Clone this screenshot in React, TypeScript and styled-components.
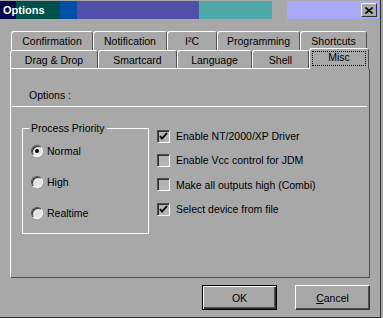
import React from 'react'
import styled, { createGlobalStyle } from 'styled-components'

const FACE = '#a8a8a8'
const SHADOW = '#505050'
const DARK = '#303030'
const HILITE = '#ffffff'

const GlobalStyle = createGlobalStyle`
  html, body {
    margin: 0;
    padding: 0;
    background: ${FACE};
  }
  body {
    font-family: "Liberation Sans", Arial, sans-serif;
    font-size: 10.5px;
    color: #000;
  }
`

const Window = styled.div`
  width: 381px;
  height: 318px;
  box-sizing: border-box;
  padding: 1px 1px 0 0;
  border-right: 1px solid ${DARK};
  border-bottom: 1px solid ${DARK};
  background: ${FACE};
  display: flex;
  flex-direction: column;
`

const TitleBar = styled.div`
  height: 18px;
  display: flex;
  align-items: center;
  justify-content: space-between;
  padding: 0 2px 0 3px;
  background: linear-gradient(
    to right,
    #08084a 0 16px,
    #00504a 16px 60px,
    #0050a8 60px 77px,
    #5050a8 77px 199px,
    #50a8a8 199px 272px,
    #a8a8a8 272px 287px,
    #a8a8f8 287px
  );
`

const Title = styled.span`
  color: #fff;
  font-weight: bold;
  font-size: 11px;
  line-height: 13px;
`

const CloseButton = styled.button`
  width: 16px;
  height: 14px;
  padding: 0;
  margin: 0;
  box-sizing: border-box;
  background: ${FACE};
  border: 1px solid;
  border-color: ${HILITE} ${DARK} ${DARK} ${HILITE};
  display: flex;
  align-items: center;
  justify-content: center;
`

const TabArea = styled.div`
  margin: 12px 0 0 10px;
  width: 360px;
  display: flex;
  flex-direction: column;
`

const TabRow = styled.div<{ $indent?: number }>`
  display: flex;
  height: ${p => (p.$indent ? 19 : 18)}px;
  padding-left: ${p => p.$indent || 0}px;
  align-items: flex-start;
`

const Tab = styled.div<{ $w: number; $tall?: boolean }>`
  width: ${p => p.$w}px;
  height: ${p => (p.$tall ? 19 : 18)}px;
  box-sizing: border-box;
  border-top: 1px solid ${HILITE};
  border-left: 1px solid ${HILITE};
  border-right: 1px solid ${SHADOW};
  border-radius: 3px 3px 0 0;
  display: flex;
  align-items: center;
  justify-content: center;
  line-height: 13px;
  white-space: nowrap;
  padding-top: 1px;
`

const ActiveTab = styled(Tab)`
  position: relative;
  z-index: 1;
  height: 21px;
  margin-top: -2px;
  background: ${FACE};
  padding: 2px 2px 3px 2px;
`

const Focus = styled.span`
  flex: 1;
  align-self: stretch;
  display: flex;
  align-items: center;
  justify-content: center;
  outline: 1px dotted #000;
  outline-offset: -1px;
  padding-bottom: 2px;
`

const Panel = styled.div`
  height: 210px;
  box-sizing: border-box;
  border-top: 1px solid ${HILITE};
  border-left: 1px solid ${HILITE};
  border-right: 1px solid ${SHADOW};
  border-bottom: 1px solid ${SHADOW};
  display: flex;
  flex-direction: column;
`

const Header = styled.div`
  height: 37px;
  box-sizing: border-box;
  padding: 20px 0 0 18px;
  line-height: 13px;
`

const Separator = styled.div`
  height: 1px;
  margin: 0 2px 0 1px;
  background: ${HILITE};
`

const Body = styled.div`
  display: flex;
  align-items: flex-start;
  padding-left: 11px;
  gap: 8px;
`

const Group = styled.fieldset`
  margin: 15px 0 0 0;
  padding: 0 0 0 8px;
  width: 127px;
  height: 112px;
  box-sizing: border-box;
  border: 1px solid ${HILITE};
  min-width: 0;
`

const Legend = styled.legend`
  margin-left: -2px;
  padding: 0 2px;
  line-height: 13px;
`

const RadioRow = styled.label`
  display: flex;
  align-items: center;
  height: 31px;
  gap: 4px;
`

const RadioDot = styled.span<{ $on?: boolean }>`
  width: 12px;
  height: 12px;
  box-sizing: border-box;
  border-radius: 50%;
  border: 1px solid;
  border-color: ${SHADOW} ${HILITE} ${HILITE} ${SHADOW};
  background: #e4e4e4;
  box-shadow: inset 1px 1px 0 ${DARK};
  display: flex;
  align-items: center;
  justify-content: center;
  &::after {
    content: '';
    width: 4px;
    height: 4px;
    border-radius: 50%;
    background: ${p => (p.$on ? '#000' : 'transparent')};
  }
`

const Checks = styled.div`
  margin-top: 17px;
  display: flex;
  flex-direction: column;
`

const CheckRow = styled.label`
  display: flex;
  align-items: center;
  height: 24.3px;
  gap: 6px;
`

const CheckBox = styled.span`
  width: 13px;
  height: 13px;
  box-sizing: border-box;
  border: 1px solid;
  border-color: ${SHADOW} ${HILITE} ${HILITE} ${SHADOW};
  box-shadow: inset 1px 1px 0 ${DARK};
  background: #b4b4b4;
  display: flex;
  align-items: center;
  justify-content: center;
`

const Buttons = styled.div`
  display: flex;
  justify-content: flex-end;
  gap: 18px;
  margin-top: 7px;
  padding-right: 9px;
`

const Button = styled.button<{ $default?: boolean }>`
  width: 75px;
  height: 25px;
  box-sizing: border-box;
  margin: 0;
  padding: 0;
  font: inherit;
  color: #000;
  background: ${FACE};
  border: 1px solid;
  border-color: ${p => (p.$default ? '#000' : `${HILITE} ${DARK} ${DARK} ${HILITE}`)};
  box-shadow: ${p =>
    p.$default
      ? `inset 1px 1px 0 ${HILITE}, inset -1px -1px 0 ${DARK}, inset -2px -2px 0 ${SHADOW}`
      : `inset -1px -1px 0 ${SHADOW}`};
`

const topTabs = [
  { label: 'Confirmation', w: 82 },
  { label: 'Notification', w: 74 },
  { label: 'I²C', w: 50 },
  { label: 'Programming', w: 83 },
  { label: 'Shortcuts', w: 67 },
]

const frontTabs = [
  { label: 'Drag & Drop', w: 88 },
  { label: 'Smartcard', w: 79 },
  { label: 'Language', w: 75 },
  { label: 'Shell', w: 57 },
]

const priorities = [
  { label: 'Normal', on: true },
  { label: 'High', on: false },
  { label: 'Realtime', on: false },
]

const options = [
  { label: 'Enable NT/2000/XP Driver', on: true },
  { label: 'Enable Vcc control for JDM', on: false },
  { label: 'Make all outputs high (Combi)', on: false },
  { label: 'Select device from file', on: true },
]

const Tick = () => (
  <svg width="9" height="9" viewBox="0 0 9 9">
    <path d="M1 4 L3 6.5 L8 1" fill="none" stroke="#000" strokeWidth="1.8" />
  </svg>
)

export default function App() {
  return (
    <>
      <GlobalStyle />
      <Window>
        <TitleBar>
          <Title>Options</Title>
          <CloseButton aria-label="Close">
            <svg width="8" height="7" viewBox="0 0 8 7">
              <path d="M0.5 0.5 L7.5 6.5 M7.5 0.5 L0.5 6.5" stroke="#000" strokeWidth="1.6" />
            </svg>
          </CloseButton>
        </TitleBar>

        <TabArea>
          <TabRow $indent={1}>
            {topTabs.map(t => (
              <Tab key={t.label} $w={t.w} $tall>
                {t.label}
              </Tab>
            ))}
          </TabRow>
          <TabRow>
            {frontTabs.map(t => (
              <Tab key={t.label} $w={t.w}>
                {t.label}
              </Tab>
            ))}
            <ActiveTab $w={60}>
              <Focus>Misc</Focus>
            </ActiveTab>
          </TabRow>

          <Panel>
            <Header>Options :</Header>
            <Separator />
            <Body>
              <Group>
                <Legend>Process Priority</Legend>
                {priorities.map(p => (
                  <RadioRow key={p.label}>
                    <RadioDot $on={p.on} />
                    {p.label}
                  </RadioRow>
                ))}
              </Group>
              <Checks>
                {options.map(o => (
                  <CheckRow key={o.label}>
                    <CheckBox>{o.on && <Tick />}</CheckBox>
                    {o.label}
                  </CheckRow>
                ))}
              </Checks>
            </Body>
          </Panel>
        </TabArea>

        <Buttons>
          <Button $default>OK</Button>
          <Button>
            <u>C</u>ancel
          </Button>
        </Buttons>
      </Window>
    </>
  )
}
